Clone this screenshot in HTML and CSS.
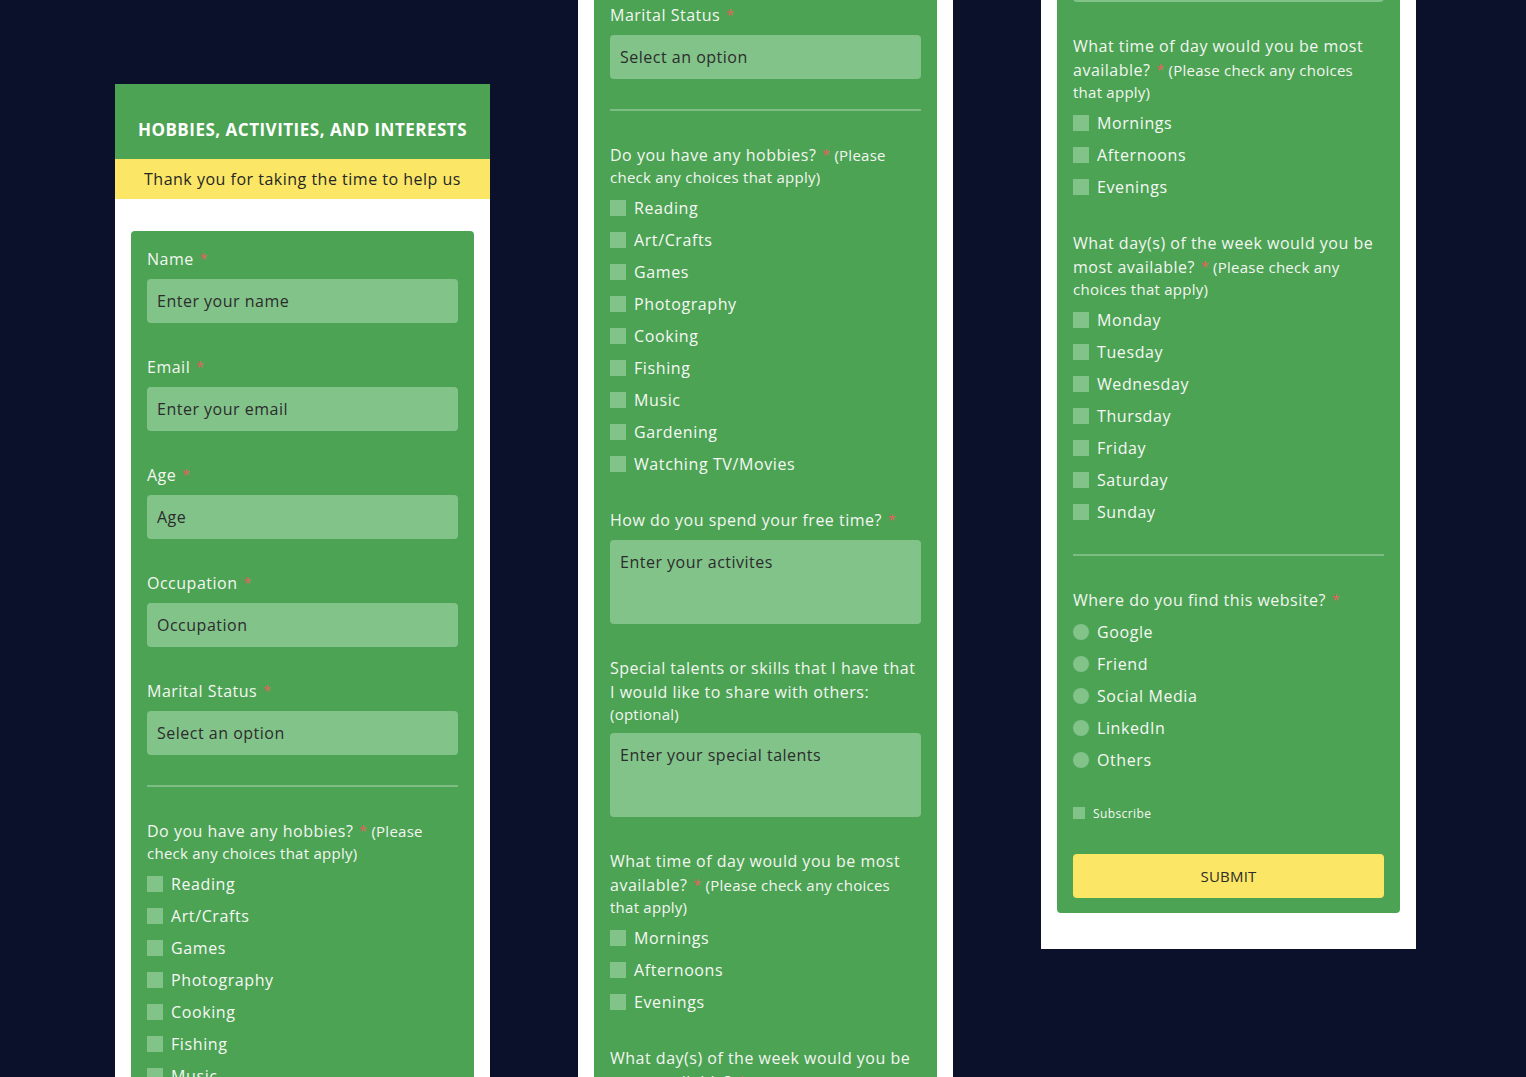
FILE: index.html
```html
<!DOCTYPE html>
<html lang="en">
<head>
<meta charset="utf-8">
<title>Hobbies, Activities, and Interests</title>
<link rel="stylesheet" href="styles.css">
</head>
<body>
<main class="stage">
  <section class="screen screen-1">
    <div class="frame">
      <header class="head">
        <h1 class="title">HOBBIES, ACTIVITIES, AND INTERESTS</h1>
        <p class="thanks">Thank you for taking the time to help us</p>
      </header>
      <form class="card">
        <div class="field"><label class="lbl"><span class="q">Name</span><span class="req">*</span></label><div class="input">Enter your name</div></div>
        <div class="field"><label class="lbl"><span class="q">Email</span><span class="req">*</span></label><div class="input">Enter your email</div></div>
        <div class="field"><label class="lbl"><span class="q">Age</span><span class="req">*</span></label><div class="input">Age</div></div>
        <div class="field"><label class="lbl"><span class="q">Occupation</span><span class="req">*</span></label><div class="input">Occupation</div></div>
        <div class="field"><label class="lbl"><span class="q">Marital Status</span><span class="req">*</span></label><div class="input">Select an option</div></div>
        <hr class="divider">
        <div class="field"><label class="lbl"><span class="q">Do you have any hobbies?</span><span class="req">*</span> (Please<br>check any choices that apply)</label>
          <ul class="opts">
            <li class="opt"><span class="box"></span>Reading</li>
            <li class="opt"><span class="box"></span>Art/Crafts</li>
            <li class="opt"><span class="box"></span>Games</li>
            <li class="opt"><span class="box"></span>Photography</li>
            <li class="opt"><span class="box"></span>Cooking</li>
            <li class="opt"><span class="box"></span>Fishing</li>
            <li class="opt"><span class="box"></span>Music</li>
            <li class="opt"><span class="box"></span>Gardening</li>
            <li class="opt"><span class="box"></span>Watching TV/Movies</li>
          </ul>
        </div>
      </form>
    </div>
  </section>

  <section class="screen screen-2">
    <div class="frame">
      <header class="head">
        <h1 class="title">HOBBIES, ACTIVITIES, AND INTERESTS</h1>
        <p class="thanks">Thank you for taking the time to help us</p>
      </header>
      <form class="card">
        <div class="field"><label class="lbl"><span class="q">Name</span><span class="req">*</span></label><div class="input">Enter your name</div></div>
        <div class="field"><label class="lbl"><span class="q">Email</span><span class="req">*</span></label><div class="input">Enter your email</div></div>
        <div class="field"><label class="lbl"><span class="q">Age</span><span class="req">*</span></label><div class="input">Age</div></div>
        <div class="field"><label class="lbl"><span class="q">Occupation</span><span class="req">*</span></label><div class="input">Occupation</div></div>
        <div class="field"><label class="lbl"><span class="q">Marital Status</span><span class="req">*</span></label><div class="input">Select an option</div></div>
        <hr class="divider">
        <div class="field"><label class="lbl"><span class="q">Do you have any hobbies?</span><span class="req">*</span> (Please<br>check any choices that apply)</label>
          <ul class="opts">
            <li class="opt"><span class="box"></span>Reading</li>
            <li class="opt"><span class="box"></span>Art/Crafts</li>
            <li class="opt"><span class="box"></span>Games</li>
            <li class="opt"><span class="box"></span>Photography</li>
            <li class="opt"><span class="box"></span>Cooking</li>
            <li class="opt"><span class="box"></span>Fishing</li>
            <li class="opt"><span class="box"></span>Music</li>
            <li class="opt"><span class="box"></span>Gardening</li>
            <li class="opt"><span class="box"></span>Watching TV/Movies</li>
          </ul>
        </div>
        <div class="field"><label class="lbl"><span class="q">How do you spend your free time?</span><span class="req">*</span></label><div class="input area">Enter your activites</div></div>
        <div class="field"><label class="lbl"><span class="q">Special talents or skills that I have that<br>I would like to share with others:</span><br>(optional)</label><div class="input area">Enter your special talents</div></div>
        <div class="field"><label class="lbl"><span class="q">What time of day would you be most<br>available?</span><span class="req">*</span> (Please check any choices<br>that apply)</label>
          <ul class="opts">
            <li class="opt"><span class="box"></span>Mornings</li>
            <li class="opt"><span class="box"></span>Afternoons</li>
            <li class="opt"><span class="box"></span>Evenings</li>
          </ul>
        </div>
        <div class="field"><label class="lbl"><span class="q">What day(s) of the week would you be<br>most available?</span><span class="req">*</span> (Please check any<br>choices that apply)</label>
          <ul class="opts">
            <li class="opt"><span class="box"></span>Monday</li>
            <li class="opt"><span class="box"></span>Tuesday</li>
          </ul>
        </div>
      </form>
    </div>
  </section>

  <section class="screen screen-3">
    <div class="frame">
      <header class="head">
        <h1 class="title">HOBBIES, ACTIVITIES, AND INTERESTS</h1>
        <p class="thanks">Thank you for taking the time to help us</p>
      </header>
      <form class="card">
        <div class="field"><label class="lbl"><span class="q">Name</span><span class="req">*</span></label><div class="input">Enter your name</div></div>
        <div class="field"><label class="lbl"><span class="q">Email</span><span class="req">*</span></label><div class="input">Enter your email</div></div>
        <div class="field"><label class="lbl"><span class="q">Age</span><span class="req">*</span></label><div class="input">Age</div></div>
        <div class="field"><label class="lbl"><span class="q">Occupation</span><span class="req">*</span></label><div class="input">Occupation</div></div>
        <div class="field"><label class="lbl"><span class="q">Marital Status</span><span class="req">*</span></label><div class="input">Select an option</div></div>
        <hr class="divider">
        <div class="field"><label class="lbl"><span class="q">Do you have any hobbies?</span><span class="req">*</span> (Please<br>check any choices that apply)</label>
          <ul class="opts">
            <li class="opt"><span class="box"></span>Reading</li>
            <li class="opt"><span class="box"></span>Art/Crafts</li>
            <li class="opt"><span class="box"></span>Games</li>
            <li class="opt"><span class="box"></span>Photography</li>
            <li class="opt"><span class="box"></span>Cooking</li>
            <li class="opt"><span class="box"></span>Fishing</li>
            <li class="opt"><span class="box"></span>Music</li>
            <li class="opt"><span class="box"></span>Gardening</li>
            <li class="opt"><span class="box"></span>Watching TV/Movies</li>
          </ul>
        </div>
        <div class="field"><label class="lbl"><span class="q">How do you spend your free time?</span><span class="req">*</span></label><div class="input area">Enter your activites</div></div>
        <div class="field"><label class="lbl"><span class="q">Special talents or skills that I have that<br>I would like to share with others:</span><br>(optional)</label><div class="input area">Enter your special talents</div></div>
        <div class="field"><label class="lbl"><span class="q">What time of day would you be most<br>available?</span><span class="req">*</span> (Please check any choices<br>that apply)</label>
          <ul class="opts">
            <li class="opt"><span class="box"></span>Mornings</li>
            <li class="opt"><span class="box"></span>Afternoons</li>
            <li class="opt"><span class="box"></span>Evenings</li>
          </ul>
        </div>
        <div class="field"><label class="lbl"><span class="q">What day(s) of the week would you be<br>most available?</span><span class="req">*</span> (Please check any<br>choices that apply)</label>
          <ul class="opts">
            <li class="opt"><span class="box"></span>Monday</li>
            <li class="opt"><span class="box"></span>Tuesday</li>
            <li class="opt"><span class="box"></span>Wednesday</li>
            <li class="opt"><span class="box"></span>Thursday</li>
            <li class="opt"><span class="box"></span>Friday</li>
            <li class="opt"><span class="box"></span>Saturday</li>
            <li class="opt"><span class="box"></span>Sunday</li>
          </ul>
        </div>
        <hr class="divider">
        <div class="field"><label class="lbl"><span class="q">Where do you find this website?</span><span class="req">*</span></label>
          <ul class="opts">
            <li class="opt"><span class="box radio"></span>Google</li>
            <li class="opt"><span class="box radio"></span>Friend</li>
            <li class="opt"><span class="box radio"></span>Social Media</li>
            <li class="opt"><span class="box radio"></span>LinkedIn</li>
            <li class="opt"><span class="box radio"></span>Others</li>
          </ul>
        </div>
        <div class="subscribe"><span class="box small"></span>Subscribe</div>
        <button class="submit" type="button">SUBMIT</button>
      </form>
    </div>
  </section>
</main>
</body>
</html>
```

FILE: styles.css
```css
* { box-sizing: border-box; }

html, body {
  margin: 0;
  padding: 0;
  height: 100%;
}

body {
  background: #0b112b;
  font-family: "Open Sans", "DejaVu Sans", sans-serif;
  letter-spacing: 0.5px;
  overflow: hidden;
}

.stage {
  display: flex;
  align-items: flex-start;
  gap: 88px;
  padding-left: 115px;
  height: 1077px;
  overflow: hidden;
}

.screen {
  width: 375px;
  flex: 0 0 375px;
}

.screen-1 { margin-top: 84px; }
.screen-2 { margin-top: -592px; }
.screen-3 { margin-top: -1407px; }

.frame {
  background: #ffffff;
  padding-bottom: 36px;
}

.head {
  background: #4ca354;
}

.title {
  margin: 0;
  padding: 34px 8px 17px;
  color: #ffffff;
  font-size: 17px;
  line-height: 24px;
  font-weight: 700;
  text-align: center;
  letter-spacing: 0.5px;
}

.thanks {
  margin: 0;
  background: #fbe765;
  color: #262626;
  font-size: 16px;
  line-height: 24px;
  padding: 8px 8px;
  text-align: center;
}

.card {
  margin: 32px 16px 0;
  background: #4ca354;
  border-radius: 4px;
  padding: 16px 16px 15px;
  display: flex;
  flex-direction: column;
  gap: 32px;
}

.field {
  display: flex;
  flex-direction: column;
  gap: 8px;
}

.lbl {
  display: block;
  color: #f3f6f1;
  font-size: 15px;
  line-height: 21px;
  letter-spacing: 0.25px;
}

.q {
  font-size: 16px;
  line-height: 24px;
  letter-spacing: 0.5px;
}

.req {
  color: #e8605c;
  font-size: 14px;
  margin-left: 6px;
  vertical-align: 1px;
  line-height: 1;
}

.input {
  height: 44px;
  background: #82c38a;
  border-radius: 4px;
  color: #2c2c2c;
  font-size: 16px;
  line-height: 24px;
  padding: 10px 10px;
}

.input.area {
  height: 84px;
}

.divider {
  margin: -2px 0 0;
  border: 0;
  height: 2px;
  background: #7dbd84;
}

.opts {
  list-style: none;
  margin: 0;
  padding: 0;
  display: flex;
  flex-direction: column;
  gap: 8px;
}

.opt {
  display: flex;
  align-items: center;
  gap: 8px;
  height: 24px;
  color: #f6f8f4;
  font-size: 16px;
  line-height: 24px;
  letter-spacing: 0.6px;
}

.box {
  width: 16px;
  height: 16px;
  flex: 0 0 16px;
  background: #82c38a;
}

.box.radio {
  border-radius: 50%;
}

.subscribe {
  display: flex;
  align-items: center;
  gap: 8px;
  height: 18px;
  color: #f6f8f4;
  font-size: 12px;
  letter-spacing: 0.4px;
}

.box.small {
  width: 12px;
  height: 12px;
  flex: 0 0 12px;
}

.submit {
  height: 44px;
  border: 0;
  border-radius: 4px;
  background: #fbe765;
  color: #2c2c2c;
  font-family: inherit;
  font-size: 15px;
  letter-spacing: 0.2px;
  cursor: pointer;
}
```
